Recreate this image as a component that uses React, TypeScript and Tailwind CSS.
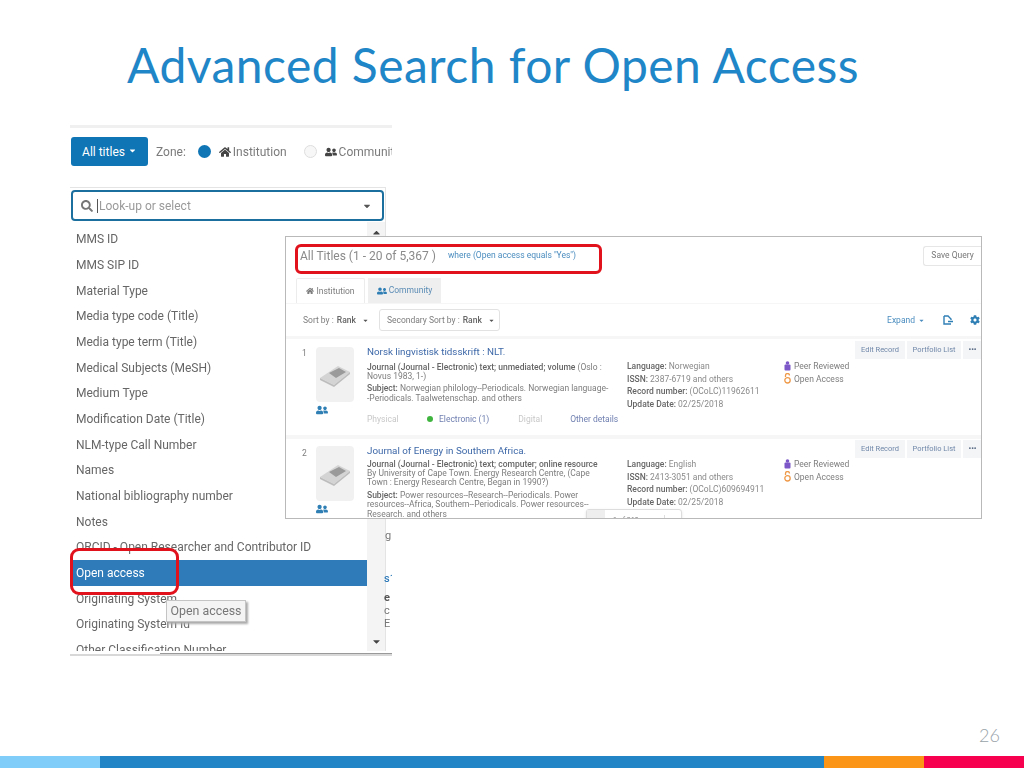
import { FaHome, FaUserFriends, FaCaretDown, FaCaretUp, FaCog, FaSearch } from "react-icons/fa";

const fields = [
  "MMS ID", "MMS SIP ID", "Material Type", "Media type code (Title)", "Media type term (Title)",
  "Medical Subjects (MeSH)", "Medium Type", "Modification Date (Title)", "NLM-type Call Number",
  "Names", "National bibliography number", "Notes", "ORCID - Open Researcher and Contributor ID",
  "Open access", "Originating System", "Originating System Id", "Other Classification Number",
];

function Thumb() {
  return (
    <div className="w-[38px] h-[55px] bg-[#f1f1f1] rounded-sm flex items-center justify-center">
      <svg width="32" height="24" viewBox="0 0 32 24">
        <path d="M1 15 L19 3 L31 9 L15 22 Z" fill="#d4d4d4" />
        <path d="M1 15 L15 22 L31 9 L31 11 L15 24 L1 17 Z" fill="#bdbdbd" />
        <path d="M10 10 L20 5 L27 9 L17 15 Z" fill="#9a9a9a" />
      </svg>
    </div>
  );
}

function PeerIcon() {
  return (
    <svg width="7" height="10" viewBox="0 0 7 10">
      <circle cx="3.5" cy="2" r="1.8" fill="#7b57c8" />
      <rect x="0.5" y="3.5" width="6" height="6" rx="1" fill="#7b57c8" />
    </svg>
  );
}

function LockIcon() {
  return (
    <svg width="7" height="11" viewBox="0 0 7 11" fill="none" stroke="#ef9a4a" strokeWidth="1.3">
      <path d="M1.5 4 V2.5 a2 2 0 0 1 4 0" />
      <circle cx="3.5" cy="7.3" r="2.7" />
    </svg>
  );
}

function Actions() {
  return (
    <div className="flex gap-[2px] text-[7.5px] text-[#6f87a8] h-[18px]">
      <div className="w-[50px] bg-[#f4f5f7] flex items-center justify-center">Edit Record</div>
      <div className="w-[54px] bg-[#f4f5f7] flex items-center justify-center">Portfolio List</div>
      <div className="w-[19px] bg-[#f4f5f7] flex items-center justify-center font-bold text-[#5a6b85]">•••</div>
    </div>
  );
}

function Meta({ rows, top }: { rows: [string, string][]; top: string }) {
  return (
    <div className={`w-[157px] flex flex-col gap-[3px] text-[8.5px] leading-[9.5px] text-[#8a8a8a] ${top}`}>
      {rows.map(([k, v]) => (
        <div key={k}>
          <span className="font-medium text-[#666]">{k}</span> {v}
        </div>
      ))}
    </div>
  );
}

function Badges({ top }: { top: string }) {
  return (
    <div className={`flex flex-col gap-[2px] text-[8.5px] leading-[10px] text-[#7d7d7d] ${top}`}>
      <div className="flex items-center gap-[3px]"><PeerIcon />Peer Reviewed</div>
      <div className="flex items-center gap-[3px]"><LockIcon />Open Access</div>
    </div>
  );
}

export default function App() {
  return (
    <div className="relative w-[1024px] h-[768px] bg-white overflow-hidden font-['Roboto',sans-serif]">
      <h1 className="absolute left-[127px] top-[36px] text-[48px] leading-[58px] text-[#1f86c7] font-['Lato',sans-serif] font-normal tracking-[0.46px] whitespace-nowrap">
        Advanced Search for Open Access
      </h1>

      {/* left screenshot */}
      <div className="absolute left-[70px] top-[125px] w-[322px] h-[531px] overflow-hidden blur-[0.35px]">
        <div className="h-[3px] bg-[#f0f0f0]" />
        <div className="flex items-center h-[29px] mt-[9px] text-[12px] text-[#7b7b7b] whitespace-nowrap">
          <div className="shrink-0 ml-[1px] w-[77px] h-[29px] rounded-[3px] bg-[#0f75b5] text-white flex items-center justify-center gap-[3px]">
            All titles <FaCaretDown size={9} className="-mt-[3px]" />
          </div>
          <span className="ml-[8px]">Zone:</span>
          <span className="shrink-0 ml-[12px] w-[13px] h-[13px] rounded-full bg-[#0f75b5]" />
          <FaHome size={12} className="shrink-0 ml-[8px] text-[#444]" />
          <span className="ml-[2px]">Institution</span>
          <span className="shrink-0 ml-[17px] w-[13px] h-[13px] rounded-full border border-[#ddd] bg-[#f7f7f7]" />
          <FaUserFriends size={12} className="shrink-0 ml-[8px] text-[#444]" />
          <span className="ml-[2px]">Community</span>
        </div>

        <div className="w-[316px] mt-[21px] border-t border-r border-[#e4e4e4]">
          <div className="ml-[1px] mt-[2px] w-[313px] h-[31px] rounded-[4px] border-2 border-[#1a6f9f] flex items-center pl-[8px] pr-[9px] text-[12px] text-[#9a9a9a]">
            <FaSearch size={12} className="text-[#777]" />
            <span className="ml-[4px] w-px h-[14px] bg-[#555]" />
            <span className="ml-[1px]">Look-up or select</span>
            <FaCaretDown size={10} className="ml-auto mr-[1px] text-[#555]" />
          </div>
          <div className="flex h-[429px] mt-[1px]">
            <div className="w-[298px] pt-[4.5px] overflow-hidden">
              {fields.map((f) => (
                <div
                  key={f}
                  className={`h-[25.67px] flex items-center pl-[6px] text-[12px] whitespace-nowrap ${
                    f === "Open access" ? "bg-[#2f7ab8] text-white" : "text-[#666]"
                  }`}
                >
                  {f}
                </div>
              ))}
            </div>
            <div className="w-[18px] bg-[#f4f4f4] flex flex-col items-center justify-between pt-[5px] pb-[4px] text-[#444]">
              <FaCaretUp size={11} />
              <FaCaretDown size={11} />
            </div>
          </div>
        </div>
        <div className="absolute left-0 right-0 bottom-0 h-[2px] bg-[#d8d8d8]" />
        <div className="absolute left-[90px] right-0 bottom-[2px] h-px bg-[#999]" />
        <div className="absolute left-[315px] top-[403px] text-[11px] text-[#777]">gi</div>
        <div className="absolute left-[314px] top-[447px] flex flex-col text-[11px] leading-[13px]">
          <span className="font-medium text-[#2f7ab8]">s1</span>
          <span className="mt-[6px] font-bold text-[#555]">e</span>
          <span className="text-[#777]">c</span>
          <span className="text-[#777]">E</span>
        </div>
      </div>

      {/* right screenshot */}
      <div className="absolute left-[285px] top-[236px] w-[697px] h-[283px] border border-[#b9b9b9] bg-[#f6f6f6] overflow-hidden blur-[0.35px] text-[#7d7d7d]">
        <div className="h-[37px] bg-white flex items-center pl-[14px]">
          <span className="text-[12px] text-[#8a8a8a]">All Titles (1 - 20 of 5,367 )</span>
          <span className="ml-[12px] text-[8.5px] text-[#4b8dbf]">where (Open access equals "Yes")</span>
          <div className="ml-auto w-[58px] h-[20px] border border-r-0 border-[#e6e6e6] rounded-l-[3px] flex items-center justify-center text-[8.5px] text-[#777]">
            Save Query
          </div>
        </div>
        <div className="flex h-[29px] pt-[4px] pl-[10px] text-[8.5px] bg-white">
          <div className="w-[69px] bg-white rounded-t-[2px] border border-b-0 border-[#ececec] flex items-center justify-center gap-[2px]">
            <FaHome size={8} /> Institution
          </div>
          <div className="ml-[3px] w-[73px] bg-[#efefef] flex items-center justify-center gap-[2px] text-[#5b8cb5]">
            <FaUserFriends size={10} className="text-[#2f7fb5]" /> Community
          </div>
        </div>
        <div className="mt-px h-[32px] bg-white flex items-center pl-[17px] text-[8.5px]">
          <span>Sort by :</span>
          <span className="ml-[3px] font-medium text-[#666]">Rank</span>
          <FaCaretDown size={7} className="ml-[6px] text-[#555]" />
          <div className="ml-[10px] w-[121px] h-[22px] border border-[#e2e2e2] rounded-[3px] flex items-center pl-[7px]">
            <span>Secondary Sort by :</span>
            <span className="ml-[3px] font-medium text-[#666]">Rank</span>
            <FaCaretDown size={7} className="ml-[6px] text-[#555]" />
          </div>
          <span className="ml-auto text-[8.5px] text-[#4b8dbf]">Expand</span>
          <FaCaretDown size={7} className="ml-[3px] text-[#4b8dbf]" />
          <svg width="11" height="10" viewBox="0 0 11 10" className="ml-[18px]" fill="none" stroke="#2f7fb5" strokeWidth="1.4">
            <path d="M1 1 H5 L8 4 V5 M8 9 H1 V1 M5 6.5 H10" />
          </svg>
          <FaCog size={10} className="ml-[16px] mr-px text-[#2f7fb5]" />
        </div>

        <div className="mt-[3px] h-[96px] bg-white flex pl-[16px] relative">
          <div className="w-[14px] pt-[8px] text-[8.5px]">1</div>
          <div className="pt-[8px] w-[51px]">
            <Thumb />
            <FaUserFriends size={12} className="mt-[2px] text-[#2f7fb5]" />
          </div>
          <div className="w-[260px] pt-[7px] text-[8.5px] leading-[9.2px]">
            <div className="text-[9.8px] leading-[12px] text-[#3d68a8] mb-[5px]">Norsk lingvistisk tidsskrift : NLT.</div>
            <div className="w-[243px]"><span className="font-medium text-[#666]">Journal (Journal - Electronic) text; unmediated; volume</span> (Oslo : Novus 1983, 1-)</div>
            <div className="mt-[3px] w-[243px]"><span className="font-medium text-[#666]">Subject:</span> Norwegian philology--Periodicals. Norwegian language--Periodicals. Taalwetenschap. and others</div>
            <div className="flex items-center mt-[12px] whitespace-nowrap">
              <span className="w-[60px] text-[#c8c8c8]">Physical</span>
              <span className="w-[6px] h-[6px] rounded-full bg-[#3fb53f]" />
              <span className="ml-[6px] text-[#6f7fb0]">Electronic (1)</span>
              <span className="ml-[29px] text-[#c8c8c8]">Digital</span>
              <span className="ml-[28px] text-[#6f7fb0]">Other details</span>
            </div>
          </div>
          <Meta top="pt-[23px]" rows={[["Language:", "Norwegian"], ["ISSN:", "2387-6719 and others"], ["Record number:", "(OCoLC)11962611"], ["Update Date:", "02/25/2018"]]} />
          <Badges top="pt-[22px]" />
          <div className="absolute right-[-1px] top-[2px]"><Actions /></div>
        </div>

        <div className="mt-[4px] h-[85px] bg-white flex pl-[16px] relative">
          <div className="w-[14px] pt-[8px] text-[8.5px]">2</div>
          <div className="pt-[7px] w-[51px]">
            <Thumb />
            <FaUserFriends size={12} className="mt-[2px] text-[#2f7fb5]" />
          </div>
          <div className="w-[234px] pt-[6px] text-[8.5px] leading-[9.2px]">
            <div className="text-[9.8px] leading-[12px] text-[#3d68a8] mb-[3px]">Journal of Energy in Southern Africa.</div>
            <div className="font-medium text-[#666] whitespace-nowrap">Journal (Journal - Electronic) text; computer; online resource</div>
            <div>By University of Cape Town. Energy Research Centre, (Cape Town : Energy Research Centre, Began in 1990?)</div>
            <div className="mt-[3.5px]"><span className="font-medium text-[#666]">Subject:</span> Power resources--Research--Periodicals. Power resources--Africa, Southern--Periodicals. Power resources--Research. and others</div>
          </div>
          <div className="w-[26px]" />
          <Meta top="pt-[21px]" rows={[["Language:", "English"], ["ISSN:", "2413-3051 and others"], ["Record number:", "(OCoLC)609694911"], ["Update Date:", "02/25/2018"]]} />
          <Badges top="pt-[20px]" />
          <div className="absolute right-[-1px] top-[1px]"><Actions /></div>
        </div>

        <div className="absolute left-[300px] top-[272px] w-[96px] h-[14px] bg-white border border-[#ddd] rounded-[3px] flex items-start text-[7px] shadow-sm">
          <span className="w-[18px] h-full bg-[#eee]" />
          <span className="ml-[8px] mt-[5px]">1 of 269</span>
          <span className="ml-auto mr-[8px] mt-[5px] pl-[6px] border-l border-[#ddd]">›</span>
        </div>
      </div>

      {/* callouts */}
      <div className="absolute left-[70px] top-[548px] w-[109px] h-[47px] rounded-[9px] border-[3px] border-[#e2121c]" />
      <div className="absolute left-[295px] top-[244px] w-[307px] h-[30px] rounded-[6px] border-[3px] border-[#e2121c]" />
      <div className="absolute left-[166px] top-[600px] w-[80px] h-[22px] bg-[#f4f4f4] border border-[#c4c4c4] shadow-[2px_2px_2px_#aaa] flex items-center justify-center text-[12.4px] text-[#777]">
        Open access
      </div>

      <span className="absolute left-[979px] top-[725px] text-[18px] leading-[20px] text-[#99a3a9] font-['Lato',sans-serif] font-light">26</span>

      <div className="absolute left-0 bottom-0 w-full h-[12px] flex">
        <div className="w-[100px] bg-[#81cdfa]" />
        <div className="flex-1 bg-[#2285c6]" />
        <div className="w-[100px] bg-[#fb9518]" />
        <div className="w-[100px] bg-[#f6004f]" />
      </div>
    </div>
  );
}
